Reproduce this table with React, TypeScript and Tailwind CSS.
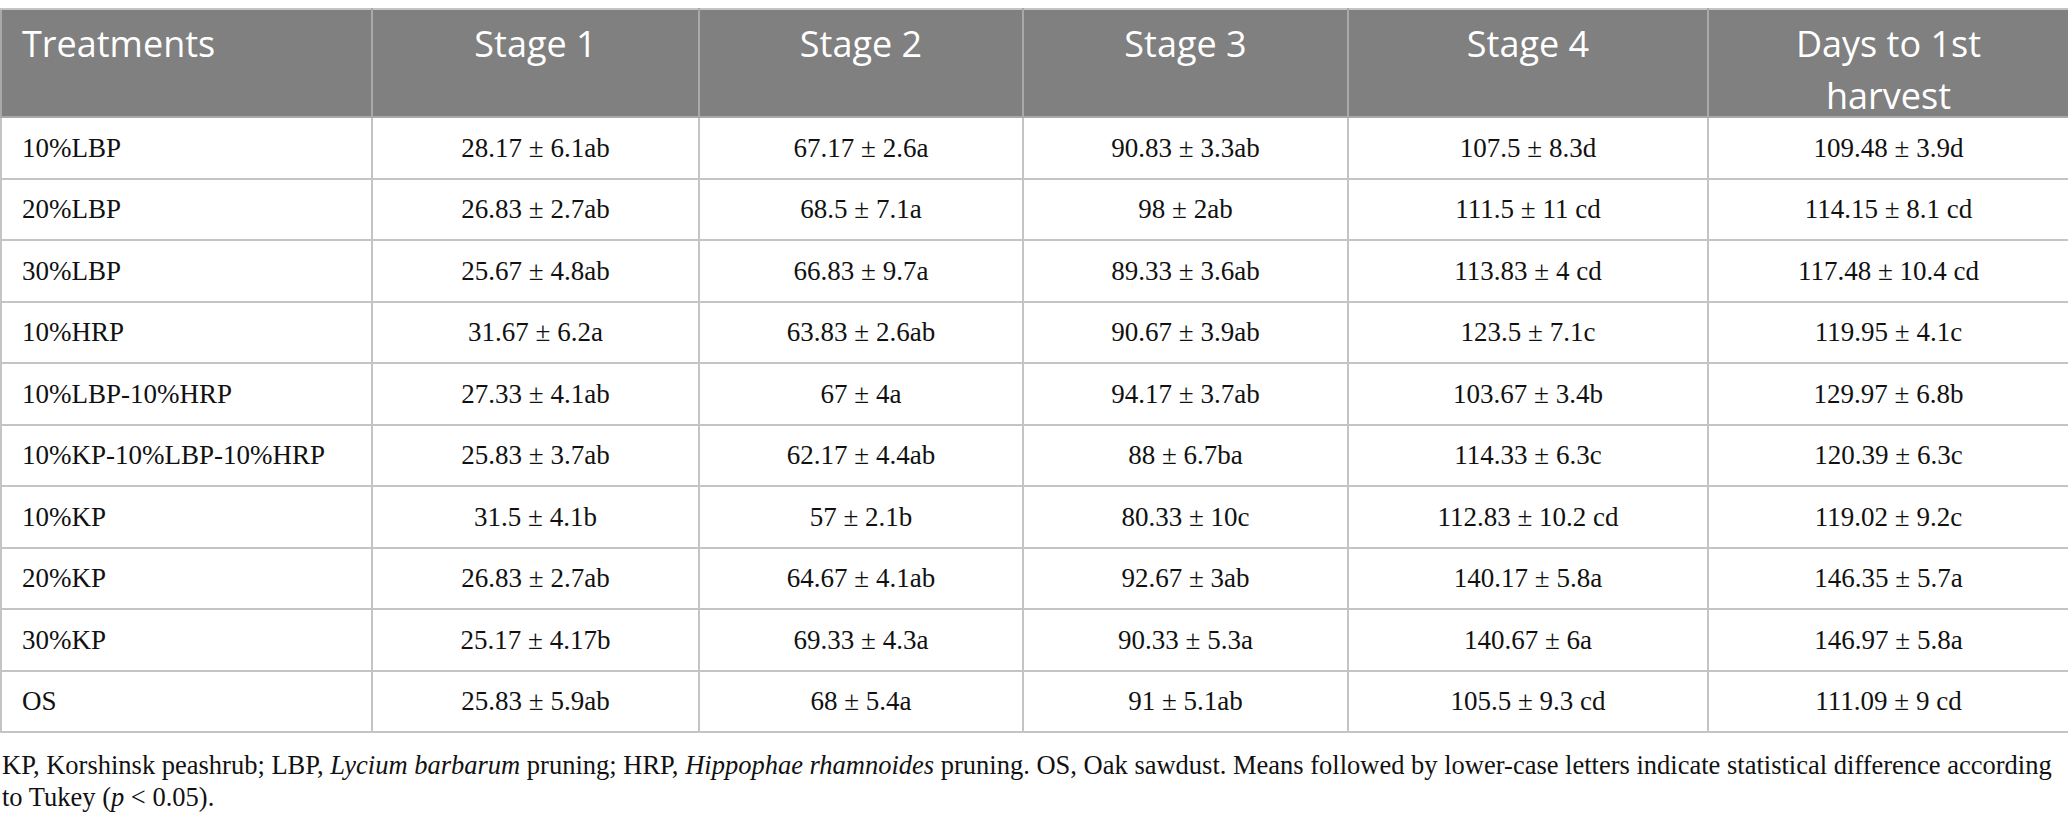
import React from "react";

type Row = [string, string, string, string, string, string];

const rows: Row[] = [
  ["10%LBP", "28.17 ± 6.1ab", "67.17 ± 2.6a", "90.83 ± 3.3ab", "107.5 ± 8.3d", "109.48 ± 3.9d"],
  ["20%LBP", "26.83 ± 2.7ab", "68.5 ± 7.1a", "98 ± 2ab", "111.5 ± 11 cd", "114.15 ± 8.1 cd"],
  ["30%LBP", "25.67 ± 4.8ab", "66.83 ± 9.7a", "89.33 ± 3.6ab", "113.83 ± 4 cd", "117.48 ± 10.4 cd"],
  ["10%HRP", "31.67 ± 6.2a", "63.83 ± 2.6ab", "90.67 ± 3.9ab", "123.5 ± 7.1c", "119.95 ± 4.1c"],
  ["10%LBP-10%HRP", "27.33 ± 4.1ab", "67 ± 4a", "94.17 ± 3.7ab", "103.67 ± 3.4b", "129.97 ± 6.8b"],
  ["10%KP-10%LBP-10%HRP", "25.83 ± 3.7ab", "62.17 ± 4.4ab", "88 ± 6.7ba", "114.33 ± 6.3c", "120.39 ± 6.3c"],
  ["10%KP", "31.5 ± 4.1b", "57 ± 2.1b", "80.33 ± 10c", "112.83 ± 10.2 cd", "119.02 ± 9.2c"],
  ["20%KP", "26.83 ± 2.7ab", "64.67 ± 4.1ab", "92.67 ± 3ab", "140.17 ± 5.8a", "146.35 ± 5.7a"],
  ["30%KP", "25.17 ± 4.17b", "69.33 ± 4.3a", "90.33 ± 5.3a", "140.67 ± 6a", "146.97 ± 5.8a"],
  ["OS", "25.83 ± 5.9ab", "68 ± 5.4a", "91 ± 5.1ab", "105.5 ± 9.3 cd", "111.09 ± 9 cd"],
];

const headers = ["Stage 1", "Stage 2", "Stage 3", "Stage 4"];

const thClass = "border-2 border-[#a9a9a9] border-t-[#c4c4c4] px-5 pt-2 pb-0 align-top font-normal";

const App: React.FC = () => {
  return (
    <div className="w-[2068px] bg-white pt-2">
      <table className="w-full table-fixed border-collapse">
        <colgroup>
          <col className="w-[371px]" />
          <col className="w-[327px]" />
          <col className="w-[324px]" />
          <col className="w-[325px]" />
          <col className="w-[360px]" />
          <col className="w-[361px]" />
        </colgroup>
        <thead>
          <tr className="bg-[#7f807f] font-['Open_Sans',sans-serif] text-[36px] leading-[52px] text-white">
            <th className={thClass + " text-left"}>
              <div className="h-[98px]">Treatments</div>
            </th>
            {headers.map((h) => (
              <th key={h} className={thClass + " text-center"}>
                <div className="h-[98px]">{h}</div>
              </th>
            ))}
            <th className={thClass + " text-center"}>
              <div className="h-[98px]">
                Days to 1st
                <br />
                harvest
              </div>
            </th>
          </tr>
        </thead>
        <tbody className="font-['Liberation_Serif',serif] text-[27px] leading-[32px] text-[#111]">
          {rows.map((r) => (
            <tr key={r[0]} className="h-[61.5px]">
              {r.map((c, i) => (
                <td
                  key={i}
                  className={
                    i === 0
                      ? "border-2 border-[#c4c4c4] px-5 text-left align-middle"
                      : "border-2 border-[#c4c4c4] px-2 text-center align-middle"
                  }
                >
                  {c}
                </td>
              ))}
            </tr>
          ))}
        </tbody>
      </table>
      <p className="mt-4 pl-0.5 font-['Liberation_Serif',serif] text-[26.5px] leading-[32px] text-[#111]">
        KP, Korshinsk peashrub; LBP, <i>Lycium barbarum</i> pruning; HRP, <i>Hippophae rhamnoides</i> pruning. OS, Oak
        sawdust. Means followed by lower-case letters indicate statistical difference according to Tukey (<i>p</i> &lt;
        0.05).
      </p>
    </div>
  );
};

export default App;
